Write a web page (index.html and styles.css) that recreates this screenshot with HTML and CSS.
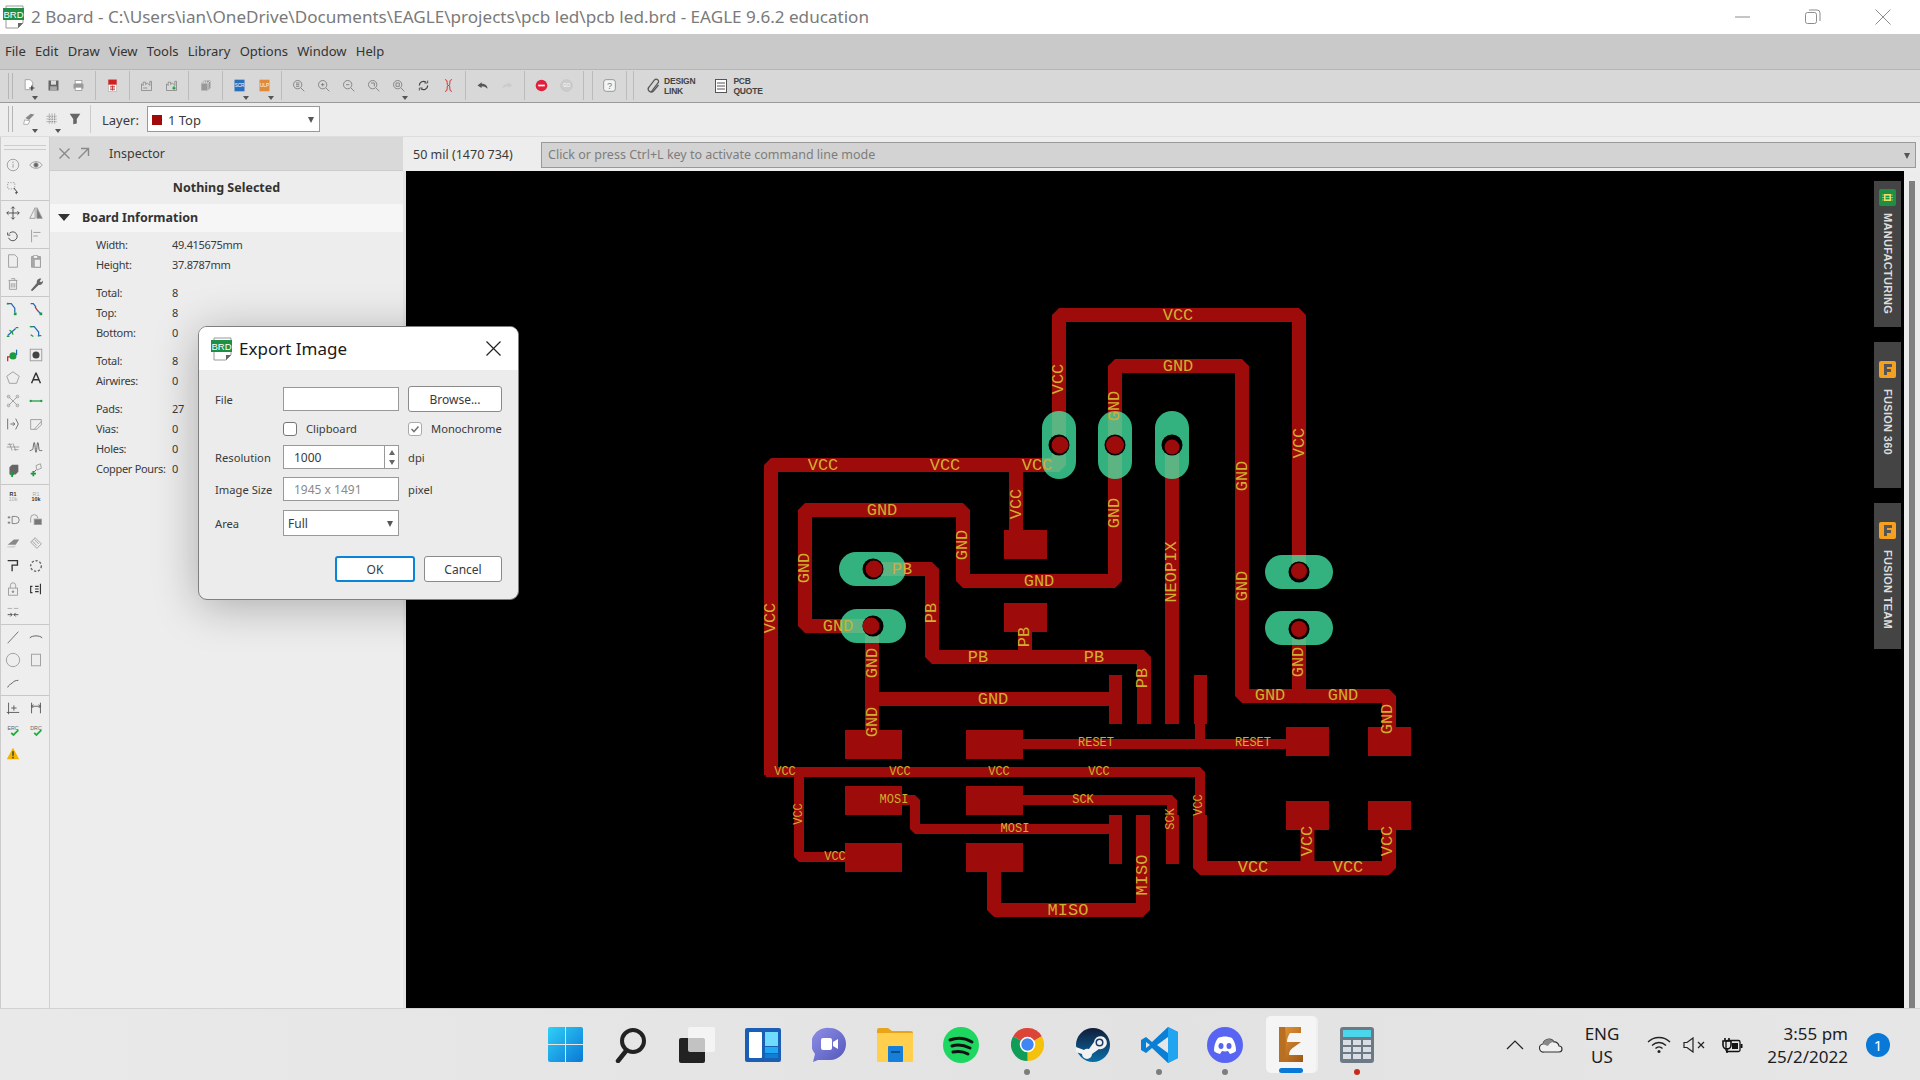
FILE: index.html
```html
<!DOCTYPE html>
<html lang="en">
<head>
    <meta charset="UTF-8">
    <meta name="viewport" content="width=device-width, initial-scale=1.0">
    <title>EAGLE Board</title>
    <link rel="stylesheet" href="styles.css">
</head>
<body>
    <div class="titlebar">
        <svg class="brd-icon" width="22" height="24" viewBox="0 0 22 24"><path d="M3 1h17v17l-5 5H3z" fill="#fff" stroke="#999"/><path d="M20 18h-5v5z" fill="#666"/><rect x="0" y="3" width="21" height="12" fill="#1f8f45"/><text x="10.5" y="13" class="brd-text">BRD</text></svg>
        <div class="title-text">2 Board - C:\Users\ian\OneDrive\Documents\EAGLE\projects\pcb led\pcb led.brd - EAGLE 9.6.2 education</div>
        <div class="win-buttons">
            <svg width="16" height="16" viewBox="0 0 16 16"><path d="M0 8h15" stroke="#8c8c8c"/></svg>
            <svg width="16" height="16" viewBox="0 0 16 16"><rect x=".5" y="3.5" width="11" height="11" rx="2" fill="none" stroke="#8c8c8c"/><path d="M4 1h8a3 3 0 0 1 3 3v8" fill="none" stroke="#8c8c8c"/></svg>
            <svg width="16" height="16" viewBox="0 0 16 16"><path d="M.5.5l15 15M15.5.5l-15 15" stroke="#8c8c8c"/></svg>
        </div>
    </div>

    <div class="menubar">
        <span>File</span><span>Edit</span><span>Draw</span><span>View</span><span>Tools</span><span>Library</span><span>Options</span><span>Window</span><span>Help</span>
    </div>

    <div class="toolbar">
        <i class="grip"></i>
        <span class="tb dd"><svg width="18" height="18" viewBox="0 0 18 18"><path d="M5 2h6l3 3v9H5z" fill="#fff" stroke="#999"/><path d="M10 12h6M13 9v6" stroke="#333" stroke-width="1.4"/></svg></span>
        <span class="tb"><svg width="18" height="18" viewBox="0 0 18 18"><path d="M3 3h12v12H3z" fill="#666"/><rect x="6" y="3" width="6" height="5" fill="#ddd"/><rect x="5" y="10" width="8" height="5" fill="#aaa"/></svg></span>
        <span class="tb"><svg width="18" height="18" viewBox="0 0 18 18"><rect x="3" y="7" width="12" height="6" rx="1" fill="#999"/><rect x="5" y="3" width="8" height="4" fill="#fff" stroke="#999"/><rect x="5" y="11" width="8" height="4" fill="#fff" stroke="#999"/></svg></span>
        <i class="tsep"></i>
        <span class="tb"><svg width="18" height="18" viewBox="0 0 18 18"><rect x="4" y="2" width="10" height="14" fill="#fff" stroke="#bbb"/><rect x="4" y="2" width="10" height="6" fill="#d02020"/><path d="M6 10h6M6 12h6M6 14h6M9 9v6" stroke="#b33"/></svg></span>
        <i class="tsep"></i>
        <span class="tb"><svg width="18" height="18" viewBox="0 0 18 18"><path d="M3 15V7l2 2V5h3v3l2-2 3 3V4h2v11z" fill="none" stroke="#888"/><path d="M5 12h5" stroke="#888"/></svg></span>
        <span class="tb"><svg width="18" height="18" viewBox="0 0 18 18"><path d="M3 15V7l2 2V5h3v3l2-2 3 3V4h2v11z" fill="none" stroke="#888"/><path d="M10 12h4M12 10v4" stroke="#1a9c3e" stroke-width="1.5"/></svg></span>
        <i class="tsep"></i>
        <span class="tb"><svg width="18" height="18" viewBox="0 0 18 18"><path d="M4 6l3-3h8v9l-3 3H4z" fill="#999"/><path d="M4 6h8v9M12 6l3-3M6 3v3M8 3v3M10 3v3" stroke="#ddd" fill="none"/></svg></span>
        <i class="tsep"></i>
        <span class="tb dd"><svg width="18" height="18" viewBox="0 0 18 18"><rect x="3" y="2" width="12" height="14" fill="#2a6fba"/><text x="9" y="11" class="mini-text">SCR</text></svg></span>
        <span class="tb dd"><svg width="18" height="18" viewBox="0 0 18 18"><rect x="3" y="2" width="12" height="14" fill="#e08a3c"/><text x="9" y="11" class="mini-text">ULP</text></svg></span>
        <i class="tsep"></i>
        <span class="tb"><svg class="zoom" width="18" height="18" viewBox="0 0 18 18"><circle cx="8" cy="8" r="5"/><path d="M12 12l4 4M6 8h4M6 6h4M6 10h4"/></svg></span>
        <span class="tb"><svg class="zoom" width="18" height="18" viewBox="0 0 18 18"><circle cx="8" cy="8" r="5"/><path d="M12 12l4 4M6 8h4M8 6v4"/></svg></span>
        <span class="tb"><svg class="zoom" width="18" height="18" viewBox="0 0 18 18"><circle cx="8" cy="8" r="5"/><path d="M12 12l4 4M6 8h4"/></svg></span>
        <span class="tb"><svg class="zoom" width="18" height="18" viewBox="0 0 18 18"><circle cx="8" cy="8" r="5"/><path d="M12 12l4 4M6 6h4v4"/></svg></span>
        <span class="tb dd"><svg class="zoom" width="18" height="18" viewBox="0 0 18 18"><circle cx="8" cy="8" r="5"/><path d="M12 12l4 4M6 6h4v4H6z"/></svg></span>
        <span class="tb"><svg width="18" height="18" viewBox="0 0 18 18"><path d="M4 9a5 5 0 0 1 8-4M14 9a5 5 0 0 1-8 4" fill="none" stroke="#444" stroke-width="1.5"/><path d="M10 6h4V3M8 12H4v3" fill="none" stroke="#444"/></svg></span>
        <span class="tb"><svg width="18" height="18" viewBox="0 0 18 18"><path d="M5 2c4 0 1 7 4 7s0 7 4 7M13 2c-4 0-1 7-4 7s0 7-4 7" fill="none" stroke="#d02020" stroke-width="1.2"/></svg></span>
        <i class="tsep"></i>
        <span class="tb"><svg width="18" height="18" viewBox="0 0 18 18"><path d="M8 5L3 9l5 3V10c3 0 5 1 7 3 0-4-3-6-7-6z" fill="#555"/></svg></span>
        <span class="tb"><svg width="18" height="18" viewBox="0 0 18 18"><path d="M10 5l5 4-5 3V10c-3 0-5 1-7 3 0-4 3-6 7-6z" fill="#ccc"/></svg></span>
        <i class="tsep"></i>
        <span class="tb"><svg width="18" height="18" viewBox="0 0 18 18"><circle cx="9" cy="9" r="7" fill="#e2203c"/><rect x="5" y="8" width="8" height="2" fill="#fff"/></svg></span>
        <span class="tb"><svg width="18" height="18" viewBox="0 0 18 18"><circle cx="9" cy="9" r="7" fill="#ccc" stroke="#c4c4c4"/><text x="9" y="11" class="mini-text">GO</text></svg></span>
        <i class="tsep"></i><i class="tsep"></i>
        <span class="tb"><svg width="18" height="18" viewBox="0 0 18 18"><rect x="2" y="2" width="14" height="14" rx="3" fill="#f4f4f4" stroke="#888"/><text x="9" y="13" class="help-text">?</text></svg></span>
        <i class="tsep"></i>
        <i class="tsep narrow"></i>
        <span class="linkbtn link-first"><svg width="16" height="18" viewBox="0 0 16 18"><path d="M5 15l7-9a2.300 2.300 0 0 0-3.500-3L3 10a3 3 0 0 0 4.500 4l5-6" fill="none" stroke="#555" stroke-width="1.200"/></svg><span>DESIGN<br>LINK</span></span>
        <span class="linkbtn link-second"><svg width="14" height="18" viewBox="0 0 14 18"><rect x="1.5" y="2.5" width="11" height="13" fill="#fff" stroke="#555"/><path d="M3 6h8M3 9h8M3 12h8" stroke="#555" stroke-width="1.200"/></svg><span>PCB<br>QUOTE</span></span>
    </div>

    <div class="layerbar">
        <i class="grip"></i>
        <span class="lb dd"><svg width="18" height="18" viewBox="0 0 18 18"><path d="M5 8l6-5 4 1-6 6z" fill="#888"/><path d="M4 10l6 1-2 4H3z" fill="#fff" stroke="#aaa"/></svg></span>
        <span class="lb dd"><svg width="18" height="18" viewBox="0 0 18 18"><path d="M6 3v12M9 3v12M12 3v12M3 6h12M3 9h12M3 12h12" stroke="#777" stroke-dasharray="1 1"/></svg></span>
        <span class="lb"><svg width="18" height="18" viewBox="0 0 18 18"><path d="M3 3h12l-4 6v5l-4 1V9z" fill="#666"/></svg></span>
        <i class="lsep"></i>
        <span class="layer-label">Layer:</span>
        <div class="layer-combo"><i class="swatch"></i><span>1 Top</span><i class="tri"></i></div>
    </div>

    <div class="workspace">
        <div class="toolstrip">
            <div class="tool-grip"></div>
            <div class="tool-group">
                <span><svg class="ic" viewBox="0 0 18 18"><circle cx="9" cy="9" r="6.5"/><path d="M9 8v4M9 5v2"/></svg></span>
                <span><svg class="ic" viewBox="0 0 18 18"><path d="M2 9c3-5 11-5 14 0-3 5-11 5-14 0z"/><circle cx="9" cy="9" r="2.5" fill="#666"/></svg></span>
                <span><svg class="ic" viewBox="0 0 18 18"><path d="M3 3h8v7H3z" stroke-dasharray="1.500 1.500"/><path d="M10 9l4 5-2 0 1 2" stroke="#333"/></svg></span>
            </div>
            <div class="tool-group">
                <span><svg class="ic" viewBox="0 0 18 18"><path d="M9 2v14M2 9h14M7 4l2-2 2 2M7 14l2 2 2-2M4 7L2 9l2 2M14 7l2 2-2 2" stroke="#444"/></svg></span>
                <span><svg class="ic" viewBox="0 0 18 18"><path d="M8 3L2 15h6z"/><path d="M10 3l6 12h-6z" fill="#777"/></svg></span>
                <span><svg class="ic" viewBox="0 0 18 18"><path d="M5 6a5 5 0 1 1-1 5M3 5v3h3" stroke="#444"/></svg></span>
                <span><svg class="ic" viewBox="0 0 18 18"><path d="M4 2v14M6 5h8M6 9h5"/></svg></span>
            </div>
            <div class="tool-group">
                <span><svg class="ic" viewBox="0 0 18 18"><path d="M4 2h7l3 3v11H4z"/></svg></span>
                <span><svg class="ic" viewBox="0 0 18 18"><path d="M4 4h10v12H4z" fill="#aaa"/><path d="M6 3h5v3H6z" fill="#fff"/><path d="M7 7h7v9H7z" fill="#eee"/></svg></span>
                <span><svg class="ic" viewBox="0 0 18 18"><path d="M4 5h10M5 5v10h8V5M7 3h4v2M7 8v5M9 8v5M11 8v5"/></svg></span>
                <span><svg class="ic" viewBox="0 0 18 18"><path d="M3 16l7-8c-1-3 2-6 5-5l-2 3 2 1 2-2c0 4-3 6-5 5l-7 7z" fill="#666" stroke="none"/></svg></span>
            </div>
            <div class="tool-group long">
                <span><svg class="ic" viewBox="0 0 18 18"><path d="M3 3h4l4 5v5" stroke="#1f6bb5" stroke-width="1.4"/><rect x="2" y="2" width="2" height="2" fill="#1a9c3e" stroke="none"/><rect x="10" y="13" width="3" height="3" fill="#1a9c3e" stroke="none"/></svg></span>
                <span><svg class="ic" viewBox="0 0 18 18"><path d="M3 3h3l3 4" stroke="#1f6bb5" stroke-width="1.4"/><path d="M8 7l3 4" stroke="#d02020" stroke-width="1.4"/><path d="M11 11l3 3" stroke="#1f6bb5" stroke-width="1.4"/><rect x="13" y="13" width="3" height="3" fill="#1a9c3e" stroke="none"/></svg></span>
                <span><svg class="ic" viewBox="0 0 18 18"><path d="M3 13L12 5" stroke="#1f6bb5" stroke-width="1.4"/><path d="M5 7l3 2 1 3M2 14h3M12 4h3" stroke="#1a9c3e" stroke-width="1.4"/></svg></span>
                <span><svg class="ic" viewBox="0 0 18 18"><path d="M3 3h4l5 6v5" stroke="#1f6bb5" stroke-width="1.4"/><path d="M3 12l3 2M11 13h4M2 3h3" stroke="#1a9c3e" stroke-width="1.4"/></svg></span>
                <span><svg class="ic" viewBox="0 0 18 18"><path d="M3 16v-5h3" stroke="#d02020" stroke-width="1.4"/><circle cx="9" cy="10" r="4" fill="#1a9c3e" stroke="none"/><path d="M13 9V3" stroke="#1f6bb5" stroke-width="1.4"/></svg></span>
                <span><svg class="ic" viewBox="0 0 18 18"><rect x="2.5" y="2.5" width="13" height="13"/><circle cx="9" cy="9" r="4" fill="#444" stroke="none"/></svg></span>
                <span><svg class="ic" viewBox="0 0 18 18"><path d="M9 2l7 5-3 8H5L2 7z"/></svg></span>
                <span><svg class="ic" viewBox="0 0 18 18"><path d="M9 3L4 15M9 3l5 12M6 11h6" stroke="#333" stroke-width="1.6"/></svg></span>
                <span><svg class="ic" viewBox="0 0 18 18"><path d="M4 4l10 10M14 4L4 14" stroke="#999"/><circle cx="4" cy="4" r="1.5"/><circle cx="14" cy="4" r="1.5"/><circle cx="4" cy="14" r="1.5"/><circle cx="14" cy="14" r="1.5"/></svg></span>
                <span><svg class="ic" viewBox="0 0 18 18"><path d="M3 9h12" stroke="#1a9c3e" stroke-width="1.4"/><circle cx="3" cy="9" r="1.300" fill="#1a9c3e" stroke="none"/><circle cx="15" cy="9" r="1.300" fill="#1a9c3e" stroke="none"/></svg></span>
                <span><svg class="ic" viewBox="0 0 18 18"><path d="M3 3v12M6 9h5M9 7l2 2-2 2M12 3l3 6-3 6" stroke="#666"/></svg></span>
                <span><svg class="ic" viewBox="0 0 18 18"><path d="M3 4h12v6l-5 5H3zM7 15l8-9"/></svg></span>
                <span><svg class="ic" viewBox="0 0 18 18"><path d="M2 9h14M5 5l3 8M9 5l3 8M3 6h5M10 12h5"/></svg></span>
                <span><svg class="ic" viewBox="0 0 18 18"><path d="M2 13c2 0 2-1 3-1s1-8 2-8 1 11 2 11 1-11 2-11 1 9 2 9 1 0 3 0" stroke="#555"/></svg></span>
                <span><svg class="ic" viewBox="0 0 18 18"><path d="M5 6l3-3h7v8l-3 3H5z" fill="#666" stroke="none"/><path d="M6 14h4M8 11v6" stroke="#1a9c3e" stroke-width="2"/></svg></span>
                <span><svg class="ic" viewBox="0 0 18 18"><path d="M9 4l5-2 1 5-5 2z" stroke="#999"/><path d="M3 13h6M6 10v6" stroke="#1a9c3e" stroke-width="2"/><path d="M9 9l-2 2" stroke="#555"/></svg></span>
            </div>
            <div class="tool-group">
                <span><svg class="ic" viewBox="0 0 18 18"><text x="9" y="8" class="tool-text dark">R1</text><text x="9" y="14" class="tool-text pale">10k</text></svg></span>
                <span><svg class="ic" viewBox="0 0 18 18"><text x="9" y="8" class="tool-text pale">R1</text><text x="9" y="14" class="tool-text dark">10k</text></svg></span>
                <span><svg class="ic" viewBox="0 0 18 18"><path d="M8 5h4a4 4 0 0 1 0 8H8zM3 6h3M3 12h3M4.5 4.5v3M4.5 10.5v3" stroke="#777"/></svg></span>
                <span><svg class="ic" viewBox="0 0 18 18"><path d="M3 12V7a4 4 0 0 1 8 0"/><rect x="7" y="8" width="8" height="6" fill="#777"/></svg></span>
                <span><svg class="ic" viewBox="0 0 18 18"><path d="M3 11l7-6h6l-4 6z" fill="#888" stroke="none"/><path d="M2 13l10-1-1 2H3z" fill="#ccc" stroke="none"/></svg></span>
                <span><svg class="ic" viewBox="0 0 18 18"><path d="M3 8l5-5 7 7-5 5zM5 7l5 5M7 5l5 5"/></svg></span>
                <span><svg class="ic" viewBox="0 0 18 18"><path d="M3 3h11v5H8v7" stroke="#333" stroke-width="1.5"/></svg></span>
                <span><svg class="ic" viewBox="0 0 18 18"><circle cx="9" cy="9" r="6" stroke="#666" stroke-width="1.6" stroke-dasharray="2.500 2"/></svg></span>
                <span><svg class="ic" viewBox="0 0 18 18"><path d="M6 8V5a3 3 0 0 1 6 0v3"/><rect x="4" y="8" width="10" height="8"/><circle cx="9" cy="12" r="1" fill="#777"/></svg></span>
                <span><svg class="ic" viewBox="0 0 18 18"><path d="M5 6H3v7h2M8 6h4M8 9h4M8 12h4M14 3v12" stroke="#333" stroke-width="1.3"/></svg></span>
                <span><svg class="ic" viewBox="0 0 18 18"><path d="M3 5h5M10 5h5" stroke="#aaa"/><path d="M3 12h5M10 12h5M6 10l2 2-2 2M12 10l-2 2 2 2" stroke="#444"/></svg></span>
            </div>
            <div class="tool-group">
                <span><svg class="ic" viewBox="0 0 18 18"><path d="M3 16L15 3" stroke="#666"/></svg></span>
                <span><svg class="ic" viewBox="0 0 18 18"><path d="M2 10c3-3 11-3 14 0" stroke="#555"/></svg></span>
                <span><svg class="ic" viewBox="0 0 18 18"><circle cx="9" cy="9" r="7.5"/></svg></span>
                <span><svg class="ic" viewBox="0 0 18 18"><rect x="4" y="2.5" width="10" height="13"/></svg></span>
                <span><svg class="ic" viewBox="0 0 18 18"><path d="M3 14c1-3 3-3 5-5s4-3 7-3" stroke="#555"/></svg></span>
            </div>
            <div class="tool-group">
                <span><svg class="ic" viewBox="0 0 18 18"><path d="M4 3v13M2 14h14M7 9h6M10 6v6" stroke="#555"/></svg></span>
                <span><svg class="ic" viewBox="0 0 18 18"><path d="M4 3v12M14 3v12M4 7h10M6 5L4 7l2 2M12 5l2 2-2 2" stroke="#555"/></svg></span>
                <span><svg class="ic" viewBox="0 0 18 18"><text x="9" y="8" class="tool-text mid">ERC</text><path d="M7 11l2.500 2.500L15 8" stroke="#1fae3c" stroke-width="2"/></svg></span>
                <span><svg class="ic" viewBox="0 0 18 18"><text x="9" y="8" class="tool-text mid">DRC</text><path d="M7 11l2.500 2.500L15 8" stroke="#1fae3c" stroke-width="2"/></svg></span>
                <span><svg class="ic" viewBox="0 0 18 18"><path d="M9 2l7 13H2z" fill="#f3b400" stroke="none"/><path d="M9 6v5M9 12v2" stroke="#333" stroke-width="1.5"/></svg></span>
            </div>
        </div>

        <div class="inspector">
            <div class="inspector-head">
                <svg width="13" height="13" viewBox="0 0 13 13"><path d="M1.5 1.500l10 10M11.500 1.500l-10 10" stroke="#8a8a8a" stroke-width="1.4"/></svg>
                <svg class="popout" width="13" height="13" viewBox="0 0 13 13"><path d="M1.500 11.500l10-10M4 1.500h7.500V9" fill="none" stroke="#8a8a8a" stroke-width="1.4"/></svg>
                <span>Inspector</span>
            </div>
            <div class="nothing">Nothing Selected</div>
            <div class="board-info"><i class="tri-big"></i><span>Board Information</span></div>
            <div class="info-list">
                <div class="info-group">
                    <div class="info-row"><span>Width:</span><span>49.415675mm</span></div>
                    <div class="info-row"><span>Height:</span><span>37.8787mm</span></div>
                </div>
                <div class="info-group">
                    <div class="info-row"><span>Total:</span><span>8</span></div>
                    <div class="info-row"><span>Top:</span><span>8</span></div>
                    <div class="info-row"><span>Bottom:</span><span>0</span></div>
                </div>
                <div class="info-group">
                    <div class="info-row"><span>Total:</span><span>8</span></div>
                    <div class="info-row"><span>Airwires:</span><span>0</span></div>
                </div>
                <div class="info-group">
                    <div class="info-row"><span>Pads:</span><span>27</span></div>
                    <div class="info-row"><span>Vias:</span><span>0</span></div>
                    <div class="info-row"><span>Holes:</span><span>0</span></div>
                    <div class="info-row"><span>Copper Pours:</span><span>0</span></div>
                </div>
            </div>
        </div>

        <div class="main">
            <div class="cmd-row">
                <span class="grid-info">50 mil (1470 734)</span>
                <div class="cmd-input"><span>Click or press Ctrl+L key to activate command line mode</span><i class="tri"></i></div>
            </div>
            <div class="canvas-row">
                <div class="canvas">
                    <svg class="pcb" width="1498" height="838" viewBox="406 171 1498 838">
                        <g class="w14">
                            <polyline points="1299,572 1299,315 1059,315 1059,465 771,465 771,775"/>
                            <polyline points="1115,445 1115,366 1242,366 1242,696 1389,696 1389,727"/>
                            <polyline points="1115,445 1115,581 963,581 963,510 805,510 805,626 873,626"/>
                            <polyline points="1016,465 1016,530"/>
                            <polyline points="873,569 932,569 932,657 1144,657 1144,724"/>
                            <polyline points="1025,632 1025,657"/>
                            <polyline points="1172,445 1172,724"/>
                            <polyline points="872,626 872,730"/>
                            <polyline points="872,699 1115,699"/>
                            <polyline points="1299,629 1299,696"/>
                            <polyline points="1143,815 1143,910 994,910 994,872"/>
                            <polyline points="1200,815 1200,868 1389,868 1389,830"/>
                            <polyline points="1307.5,868 1307.5,830"/>
                        </g>
                        <g class="w10">
                            <polyline points="766,772 1200,772 1200,815"/>
                            <polyline points="1023,744 1286,744"/>
                            <polyline points="1200,724 1200,744"/>
                            <polyline points="799,772 799,857 845,857"/>
                            <polyline points="902,800 915,800 915,829 1109,829"/>
                            <polyline points="1023,800 1172,800 1172,815"/>
                        </g>
                        <g class="smd">
                            <rect x="1004" y="530" width="43" height="29"/>
                            <rect x="1004" y="603" width="43" height="29"/>
                            <rect x="845" y="730" width="57" height="29"/>
                            <rect x="966" y="730" width="57" height="29"/>
                            <rect x="845" y="786" width="57" height="29"/>
                            <rect x="966" y="786" width="57" height="29"/>
                            <rect x="845" y="843" width="57" height="29"/>
                            <rect x="966" y="843" width="57" height="29"/>
                            <rect x="1286" y="727" width="43" height="29"/>
                            <rect x="1368" y="727" width="43" height="29"/>
                            <rect x="1286" y="801" width="43" height="29"/>
                            <rect x="1368" y="801" width="43" height="29"/>
                            <rect x="1109" y="675" width="13" height="49"/>
                            <rect x="1138" y="675" width="13" height="49"/>
                            <rect x="1166" y="675" width="13" height="49"/>
                            <rect x="1194" y="675" width="13" height="49"/>
                            <rect x="1109" y="815" width="13" height="49"/>
                            <rect x="1137" y="815" width="13" height="49"/>
                            <rect x="1166" y="815" width="13" height="49"/>
                            <rect x="1194" y="815" width="13" height="49"/>
                        </g>
                        <g class="th-pad">
                            <rect x="1042" y="411" width="34" height="68" rx="17"/>
                            <rect x="1098" y="411" width="34" height="68" rx="17"/>
                            <rect x="1155" y="411" width="34" height="68" rx="17"/>
                            <rect x="839" y="552" width="67" height="34" rx="17"/>
                            <rect x="840" y="609" width="66" height="34" rx="17"/>
                            <rect x="1265" y="555" width="68" height="34" rx="17"/>
                            <rect x="1265" y="611" width="68" height="34" rx="17"/>
                        </g>
                        <g class="hole">
                            <circle cx="1059" cy="445" r="10.5"/>
                            <circle cx="1115" cy="445" r="10.5"/>
                            <circle cx="1172" cy="445" r="10.5"/>
                            <circle cx="873" cy="569" r="10.5"/>
                            <circle cx="873" cy="626" r="10.5"/>
                            <circle cx="1299" cy="572" r="10.5"/>
                            <circle cx="1299" cy="629" r="10.5"/>
                        </g>
                        <g class="drill">
                            <circle cx="1060" cy="445" r="8.5"/>
                            <circle cx="1115" cy="445" r="9"/>
                            <circle cx="1172" cy="447" r="7.5"/>
                            <circle cx="874" cy="569" r="8.5"/>
                            <circle cx="871" cy="626" r="8.5"/>
                            <circle cx="1299" cy="571" r="8"/>
                            <circle cx="1299" cy="629" r="8"/>
                        </g>
                        <g class="lbl">
                            <text x="1178" y="315">VCC</text>
                            <text x="1178" y="366">GND</text>
                            <text x="823" y="465">VCC</text>
                            <text x="945" y="465">VCC</text>
                            <text x="1037" y="465">VCC</text>
                            <text x="882" y="510">GND</text>
                            <text x="902" y="569">PB</text>
                            <text x="1039" y="581">GND</text>
                            <text x="838" y="626">GND</text>
                            <text x="978" y="657">PB</text>
                            <text x="1094" y="657">PB</text>
                            <text x="1270" y="695">GND</text>
                            <text x="1343" y="695">GND</text>
                            <text x="993" y="699">GND</text>
                            <text x="1253" y="867">VCC</text>
                            <text x="1348" y="867">VCC</text>
                            <text x="1068" y="910">MISO</text>
                            <text transform="translate(1058 379) rotate(-90)">VCC</text>
                            <text transform="translate(1114 406) rotate(-90)">GND</text>
                            <text transform="translate(1299 443) rotate(-90)">VCC</text>
                            <text transform="translate(1242 476) rotate(-90)">GND</text>
                            <text transform="translate(1016 504) rotate(-90)">VCC</text>
                            <text transform="translate(1114 513) rotate(-90)">GND</text>
                            <text transform="translate(962 545) rotate(-90)">GND</text>
                            <text transform="translate(804 568) rotate(-90)">GND</text>
                            <text transform="translate(1171 572) rotate(-90)">NEOPIX</text>
                            <text transform="translate(1242 586) rotate(-90)">GND</text>
                            <text transform="translate(770 618) rotate(-90)">VCC</text>
                            <text transform="translate(931 613) rotate(-90)">PB</text>
                            <text transform="translate(1024 637) rotate(-90)">PB</text>
                            <text transform="translate(1298 662) rotate(-90)">GND</text>
                            <text transform="translate(872 663) rotate(-90)">GND</text>
                            <text transform="translate(1142 678) rotate(-90)">PB</text>
                            <text transform="translate(1387 719) rotate(-90)">GND</text>
                            <text transform="translate(872 722) rotate(-90)">GND</text>
                            <text transform="translate(1307 841) rotate(-90)">VCC</text>
                            <text transform="translate(1387 841) rotate(-90)">VCC</text>
                            <text transform="translate(1142 875) rotate(-90)">MISO</text>
                        </g>
                        <g class="lbl small">
                            <text x="1096" y="743">RESET</text>
                            <text x="1253" y="743">RESET</text>
                            <text x="785" y="772">VCC</text>
                            <text x="900" y="772">VCC</text>
                            <text x="999" y="772">VCC</text>
                            <text x="1099" y="772">VCC</text>
                            <text x="894" y="800">MOSI</text>
                            <text x="1083" y="800">SCK</text>
                            <text x="1015" y="829">MOSI</text>
                            <text x="835" y="857">VCC</text>
                            <text transform="translate(1199 805) rotate(-90)">VCC</text>
                            <text transform="translate(799 814) rotate(-90)">VCC</text>
                            <text transform="translate(1171 819) rotate(-90)">SCK</text>
                        </g>
                    </svg>
                    <div class="side-tabs">
                        <div class="side-tab">
                            <svg width="17" height="17" viewBox="0 0 17 17"><rect width="17" height="17" rx="2" fill="#1f8f45"/><rect x="5" y="5" width="7" height="7" fill="#e8e06a"/><rect x="6.5" y="6.5" width="4" height="4" fill="#1f8f45"/><path d="M3 6h11M3 8.500h11M3 11h11" stroke="#e8e06a" stroke-width=".6" fill="none"/></svg>
                            <span>MANUFACTURING</span>
                        </div>
                        <div class="side-tab low">
                            <svg width="17" height="17" viewBox="0 0 17 17"><rect width="17" height="17" rx="2" fill="#f5a11f"/><path d="M5 3h8v3H8v2h4v3H8v3H5z" fill="#555"/></svg>
                            <span>FUSION 360</span>
                        </div>
                        <div class="side-tab low">
                            <svg width="17" height="17" viewBox="0 0 17 17"><rect width="17" height="17" rx="2" fill="#f5a11f"/><path d="M5 3h8v3H8v2h4v3H8v3H5z" fill="#555"/></svg>
                            <span>FUSION TEAM</span>
                        </div>
                    </div>
                </div>
                <div class="scrollbar"><div class="thumb"></div></div>
            </div>
        </div>
    </div>

    <div class="taskbar">
        <div class="task-icons">
            <div class="task"><svg width="35" height="35" viewBox="0 0 35 35"><defs><linearGradient id="win" x1="0" y1="0" x2="1" y2="1"><stop offset="0" stop-color="#2fd0f7"/><stop offset="1" stop-color="#0a78d6"/></linearGradient></defs><path d="M0 2a2 2 0 0 1 2-2h15v17H0zM18 0h15a2 2 0 0 1 2 2v15H18zM0 18h17v17H2a2 2 0 0 1-2-2zM18 18h17v15a2 2 0 0 1-2 2H18z" fill="url(#win)"/></svg></div>
            <div class="task"><svg width="34" height="36" viewBox="0 0 34 36"><circle cx="19" cy="14" r="11" fill="none" stroke="#222" stroke-width="4"/><path d="M12 24L4 34" stroke="#222" stroke-width="4.5" stroke-linecap="round"/></svg></div>
            <div class="task"><svg width="36" height="36" viewBox="0 0 36 36"><rect x="0" y="11" width="26" height="25" rx="2" fill="#222"/><rect x="9" y="0" width="27" height="25" rx="2" fill="#f8f8f8" fill-opacity=".75"/></svg></div>
            <div class="task"><svg width="36" height="36" viewBox="0 0 36 36"><rect width="36" height="34" y="1" rx="2" fill="#1a5fb4"/><rect x="4" y="5" width="13" height="26" rx="1" fill="#fff"/><rect x="20" y="5" width="13" height="14" fill="#6fdcff"/><rect x="20" y="20" width="13" height="6" fill="#1fa8f5"/><rect x="20" y="27" width="13" height="4" fill="#0f7fd6"/></svg></div>
            <div class="task"><svg width="34" height="36" viewBox="0 0 34 36"><defs><linearGradient id="teams" x1="0" y1="0" x2="1" y2="1"><stop offset="0" stop-color="#8f8fe8"/><stop offset="1" stop-color="#5257b8"/></linearGradient></defs><path d="M18 1a16 16 0 0 1 0 32H6l-5 2 2-8A16 16 0 0 1 18 1z" fill="url(#teams)"/><rect x="9" y="11" width="11" height="12" rx="2" fill="#fff"/><path d="M21 15l5-3v10l-5-3z" fill="#fff"/></svg></div>
            <div class="task"><svg width="36" height="34" viewBox="0 0 36 34"><path d="M0 2a2 2 0 0 1 2-2h9l4 3h19a2 2 0 0 1 2 2v6H0z" fill="#e8a51c"/><rect y="5" width="36" height="29" rx="1" fill="#ffcf4d"/><rect x="11" y="18" width="15" height="16" rx="1" fill="#1680d8"/><rect x="14" y="23" width="9" height="2" fill="#0a4f94"/></svg></div>
            <div class="task"><svg width="36" height="36" viewBox="0 0 36 36"><circle cx="18" cy="18" r="18" fill="#1ed760"/><path d="M7 13c8-3 15-2 22 2M9 19c6-2 12-1 18 2M10 25c5-1 10-1 15 2" fill="none" stroke="#111" stroke-width="3" stroke-linecap="round"/></svg></div>
            <div class="task dot"><svg width="33" height="33" viewBox="0 0 32 32"><path d="M16 16L2.140 8A16 16 0 0 1 29.860 8z" fill="#db4437"/><path d="M16 16L29.860 8A16 16 0 0 1 16 32z" fill="#f4c20d"/><path d="M16 16L16 32A16 16 0 0 1 2.140 8z" fill="#0f9d58"/><circle cx="16" cy="16" r="7.5" fill="#fff"/><circle cx="16" cy="16" r="6" fill="#4285f4"/></svg></div>
            <div class="task"><svg width="34" height="34" viewBox="0 0 34 34"><defs><linearGradient id="steam" x1="0" y1="0" x2="0" y2="1"><stop offset="0" stop-color="#111d3a"/><stop offset="1" stop-color="#0a6ea8"/></linearGradient></defs><circle cx="17" cy="17" r="17" fill="url(#steam)"/><path d="M0 19l8 3a5 5 0 0 1 5-1l5-7a6.500 6.500 0 1 1 5 7l-7 5a5 5 0 0 1-10 0L0 24z" fill="#f2f2f2"/><circle cx="23.5" cy="14.5" r="4" fill="#1d3a66"/><circle cx="23.5" cy="14.5" r="2.5" fill="#f2f2f2"/></svg></div>
            <div class="task dot"><svg width="37" height="36" viewBox="0 0 37 36"><path d="M27 0l10 5v26l-10 5L11 21l-6 5-5-3V13l5-3 6 5z" fill="#0a7fd6"/><path d="M27 0l10 5v26l-10 5z" fill="#22a5f1"/><path d="M27 10L16 18l11 8z" fill="#e6e6e6"/><path d="M5 15l4 3-4 3z" fill="#e6e6e6"/></svg></div>
            <div class="task dot"><svg width="36" height="36" viewBox="0 0 36 36"><circle cx="18" cy="18" r="18" fill="#5865f2"/><path d="M11 11c5-2 9-2 14 0 3 4 4 8 4 13-2 2-4 2-6 3l-2-3c-2 .5-4 .5-6 0l-2 3c-2-1-4-1-6-3 0-5 1-9 4-13z" fill="#fff"/><ellipse cx="14" cy="19" rx="2.5" ry="3" fill="#5865f2"/><ellipse cx="22" cy="19" rx="2.5" ry="3" fill="#5865f2"/></svg></div>
            <div class="task active"><svg width="24" height="35" viewBox="0 0 24 35"><defs><linearGradient id="eagle" x1="0" y1="0" x2="1" y2="1"><stop offset="0" stop-color="#e79a3a"/><stop offset="1" stop-color="#9c5618"/></linearGradient></defs><path d="M0 0h22v6H11c-2 3-3 6-3 9h14l-7 5c-3 2-5 4-5 8h14v7H0z" fill="url(#eagle)"/><path d="M0 0h6c1 10 1 25 0 35H0z" fill="#b96f22"/></svg></div>
            <div class="task red-dot"><svg width="34" height="36" viewBox="0 0 34 36"><rect width="34" height="36" rx="3" fill="#6d7a86"/><rect x="3" y="3" width="28" height="7" fill="#4ad7ec"/><g fill="#d8dee3"><rect x="3" y="13" width="8" height="5"/><rect x="13" y="13" width="8" height="5"/><rect x="23" y="13" width="8" height="5"/><rect x="3" y="20" width="8" height="5"/><rect x="13" y="20" width="8" height="5"/><rect x="23" y="20" width="8" height="5"/><rect x="3" y="27" width="8" height="5"/><rect x="13" y="27" width="8" height="5"/><rect x="23" y="27" width="8" height="5"/></g></svg></div>
        </div>
        <div class="tray">
            <svg width="18" height="10" viewBox="0 0 18 10"><path d="M1 9l8-8 8 8" fill="none" stroke="#222" stroke-width="1.2"/></svg>
            <svg class="tray-cloud" width="24" height="16" viewBox="0 0 24 16"><path d="M5 15a4 4 0 0 1-1-8 6 6 0 0 1 11-2 4.500 4.500 0 0 1 5 4 3 3 0 0 1 0 6z" fill="#f0f0f0" stroke="#333" stroke-width="1.2"/><path d="M4 7a6 6 0 0 1 11-2c-3 0-5 2-6 4-2-1-4-1-5-2z" fill="#888"/></svg>
            <div class="lang">ENG<br>US</div>
            <svg class="tray-wifi" width="24" height="17" viewBox="0 0 24 17"><path d="M1 6c6-6 16-6 22 0M5 9.500c4-4 10-4 14 0M8.500 12.500c2-2 5-2 7 0" fill="none" stroke="#222" stroke-width="1.3"/><circle cx="12" cy="15.5" r="1.5" fill="#222"/></svg>
            <svg class="tray-sound" width="23" height="16" viewBox="0 0 23 16"><path d="M1 5.500h3L10 1v14L4 10.500H1z" fill="none" stroke="#222" stroke-width="1.2"/><path d="M15 5l6 6M21 5l-6 6" stroke="#222" stroke-width="1.2"/></svg>
            <svg class="tray-power" width="24" height="16" viewBox="0 0 24 16"><path d="M6 1v3M10 1v3M4 4h8v4a4 4 0 0 1-8 0zM8 11v5" fill="none" stroke="#111" stroke-width="1.6"/><rect x="7" y="3.5" width="14" height="11" rx="1.5" fill="none" stroke="#111" stroke-width="1.3"/><rect x="13" y="6" width="6" height="6" fill="#111"/><rect x="21.5" y="7" width="2" height="4" fill="#111"/></svg>
            <div class="clock">3:55 pm<br>25/2/2022</div>
            <div class="badge">1</div>
        </div>
    </div>

    <div class="dialog">
        <div class="dialog-title">
            <svg class="dialog-icon" width="22" height="24" viewBox="0 0 22 24"><path d="M3 1h17v17l-5 5H3z" fill="#fff" stroke="#999"/><path d="M20 18h-5v5z" fill="#666"/><rect x="0" y="3" width="21" height="12" fill="#1f8f45"/><text x="10.5" y="13" class="brd-text">BRD</text></svg>
            <span>Export Image</span>
            <svg class="dialog-close" width="15" height="15" viewBox="0 0 15 15"><path d="M.5.5l14 14M14.500.5l-14 14" stroke="#222" stroke-width="1.2"/></svg>
        </div>
        <div class="dialog-body">
            <div class="dlg-row">
                <label class="dlg-label">File</label>
                <div class="field"></div>
                <div class="btn browse">Browse...</div>
            </div>
            <div class="dlg-row check-row">
                <div class="dlg-check"><i class="check"></i><span>Clipboard</span></div>
                <div class="dlg-check side"><i class="check on"><svg width="12" height="12" viewBox="0 0 12 12"><path d="M2.500 6l2.500 2.500 4.500-5" fill="none" stroke="#777" stroke-width="1.6"/></svg></i><span>Monochrome</span></div>
            </div>
            <div class="dlg-row">
                <label class="dlg-label">Resolution</label>
                <div class="field pad-text">1000
                    <div class="spin"><i class="up"></i><i class="down"></i></div>
                </div>
                <span class="unit">dpi</span>
            </div>
            <div class="dlg-row">
                <label class="dlg-label">Image Size</label>
                <div class="field pad-text muted">1945 x 1491</div>
                <span class="unit">pixel</span>
            </div>
            <div class="dlg-row area-row">
                <label class="dlg-label">Area</label>
                <div class="field area"><span>Full</span><i class="tri"></i></div>
            </div>
            <div class="dlg-buttons">
                <div class="btn ok">OK</div>
                <div class="btn cancel">Cancel</div>
            </div>
        </div>
    </div>
</body>
</html>
```

FILE: styles.css
```css
* {
    box-sizing: border-box;
}
body {
    margin: 0;
    padding: 0;
    width: 1920px;
    height: 1080px;
    overflow: hidden;
    position: relative;
    font-family: "Noto Sans", "Open Sans", sans-serif;
    font-size: 12px;
    color: #3a3a3a;
    background: #ededed;
    display: flex;
    flex-direction: column;
}
svg {
    display: block;
    flex: none;
}

/* window title */
.titlebar {
    height: 34px;
    background: #fff;
    display: flex;
    align-items: center;
    padding-left: 3px;
}
.title-text {
    margin-left: 6px;
    font-size: 17.1px;
    color: #7a7a7a;
    white-space: nowrap;
}
.brd-text {
    font-family: "Liberation Sans", sans-serif;
    font-size: 9.5px;
    fill: #fff;
    text-anchor: middle;
}
.win-buttons {
    margin-left: auto;
    display: flex;
    gap: 54px;
    padding-right: 29px;
}

/* menu + toolbars */
.menubar {
    height: 36px;
    background: #c9c9c9;
    border-bottom: 1px solid #b5b5b5;
    display: flex;
    align-items: center;
    gap: 9.3px;
    padding-left: 5px;
    font-size: 13px;
    color: #333;
}
.toolbar {
    height: 33px;
    background: #d8d8d8;
    border-bottom: 1px solid #999;
    display: flex;
    align-items: center;
    padding-left: 8px;
}
.grip {
    width: 5px;
    height: 26px;
    border-left: 1px solid #b5b5b5;
    border-right: 1px solid #b5b5b5;
    margin-right: 3px;
}
.tb {
    width: 25px;
    height: 26px;
    display: flex;
    align-items: center;
    justify-content: center;
    position: relative;
}
.tb svg {
    width: 15px;
    height: 15px;
}
.dd::after {
    content: "";
    position: absolute;
    left: 50%;
    bottom: -1px;
    margin-left: 3px;
    border-left: 3px solid transparent;
    border-right: 3px solid transparent;
    border-top: 4px solid #555;
}
.tsep {
    width: 9px;
    height: 29px;
    display: block;
    background: linear-gradient(#bbb, #bbb) center / 1px 100% no-repeat;
}
.tsep.narrow {
    margin-left: -2px;
}
.zoom {
    fill: none;
    stroke: #777;
    stroke-width: 1;
}
.mini-text {
    font-family: "Liberation Sans", sans-serif;
    font-size: 5.5px;
    fill: #fff;
    text-anchor: middle;
}
.help-text {
    font-family: "Liberation Sans", sans-serif;
    font-size: 11px;
    fill: #777;
    text-anchor: middle;
}
.linkbtn {
    display: flex;
    align-items: center;
    gap: 2px;
    font-family: "Liberation Sans", sans-serif;
    font-weight: bold;
    font-size: 8.5px;
    letter-spacing: -0.2px;
    line-height: 10px;
    color: #444;
}
.link-first {
    margin-left: 8px;
}
.link-second {
    margin-left: 19px;
    gap: 5px;
}
.layerbar {
    height: 34px;
    background: #ededed;
    border-bottom: 1px solid #ddd;
    display: flex;
    align-items: center;
    padding-left: 8px;
}
.layerbar .grip {
    margin-right: 4px;
}
.lb {
    width: 23px;
    height: 26px;
    display: flex;
    align-items: center;
    justify-content: center;
    position: relative;
}
.lb svg {
    width: 16px;
    height: 16px;
}
.lsep {
    width: 1px;
    height: 28px;
    background: #ccc;
    margin-left: 4px;
}
.layer-label {
    margin-left: 11px;
    padding-top: 2px;
    font-size: 13px;
}
.layer-combo {
    width: 173px;
    height: 26px;
    margin-left: 8px;
    background: #fff;
    border: 1px solid #999;
    display: flex;
    align-items: center;
    padding: 1px 0 0 4px;
    font-size: 13px;
    position: relative;
}
.swatch {
    width: 10px;
    height: 10px;
    background: #a00a0a;
    margin-right: 6px;
}
.tri {
    position: absolute;
    right: 5px;
    top: 50%;
    margin-top: -2px;
    border-left: 3.5px solid transparent;
    border-right: 3.5px solid transparent;
    border-top: 6px solid #555;
}

/* left tool strip */
.workspace {
    height: 872px;
    display: flex;
}
.toolstrip {
    width: 50px;
    flex: none;
    background: #eee;
    border-left: 1px solid #ccc;
    border-right: 1px solid #d0d0d0;
    padding-top: 8px;
}
.tool-grip {
    height: 5px;
    margin: 0 3px 4px;
    border-top: 1px solid #ccc;
    border-bottom: 1px solid #ccc;
}
.tool-group {
    display: grid;
    grid-template-columns: 23px 23px;
    grid-auto-rows: 23px;
    padding-left: 0.5px;
    border-bottom: 1px solid #c8c8c8;
    margin-bottom: 1px;
}
.tool-group:last-child {
    border-bottom: none;
}
.tool-group.long {
    padding-bottom: 2px;
}
.tool-group span {
    display: flex;
    align-items: center;
    justify-content: center;
}
.ic {
    width: 16px;
    height: 16px;
    fill: none;
    stroke: #999;
    stroke-width: 1;
}
.tool-text {
    font-family: "Liberation Sans", sans-serif;
    font-size: 6px;
    text-anchor: middle;
    stroke: none;
}
.tool-text.dark {
    fill: #333;
    font-weight: bold;
}
.tool-text.pale {
    fill: #aaa;
}
.tool-text.mid {
    fill: #666;
}

/* inspector */
.inspector {
    width: 353px;
    flex: none;
    background: #ededed;
}
.inspector-head {
    height: 34px;
    background: #d9d9d9;
    border-bottom: 1px solid #ccc;
    display: flex;
    align-items: center;
    padding: 1px 0 0 8px;
    font-size: 12.5px;
}
.popout {
    margin-left: 6px;
}
.inspector-head span {
    margin-left: 19px;
}
.nothing {
    height: 33px;
    line-height: 34px;
    text-align: center;
    font-weight: bold;
    font-size: 12.5px;
    color: #333;
}
.board-info {
    height: 28px;
    background: #f6f6f6;
    display: flex;
    align-items: center;
    padding-left: 8px;
    font-weight: bold;
    font-size: 12.5px;
    color: #333;
}
.tri-big {
    border-left: 6.5px solid transparent;
    border-right: 6.5px solid transparent;
    border-top: 7px solid #333;
    margin-right: 12px;
}
.info-list {
    padding: 3px 0 0 46px;
}
.info-group {
    margin-bottom: 8px;
}
.info-row {
    height: 20px;
    display: flex;
    align-items: center;
    font-size: 11px;
    letter-spacing: -0.3px;
    white-space: nowrap;
}
.info-row span:first-child {
    width: 76px;
}

/* command row + canvas */
.main {
    flex: 1;
    display: flex;
    flex-direction: column;
    min-width: 0;
}
.cmd-row {
    height: 34px;
    display: flex;
    align-items: center;
    background: #ededed;
    padding: 2px 0 0 10px;
}
.grid-info {
    width: 128px;
    font-size: 12.5px;
}
.cmd-input {
    width: 1375px;
    height: 26px;
    background: #d3d3d3;
    border: 1px solid #999;
    display: flex;
    align-items: center;
    padding-left: 6px;
    color: #7d7d7d;
    font-size: 12.5px;
    position: relative;
}
.canvas-row {
    flex: 1;
    display: flex;
    padding-left: 3px;
    background: #e4e4e4;
}
.canvas {
    flex: 1;
    background: #000;
    position: relative;
}
.pcb {
    position: absolute;
    left: 0;
    top: 0;
}
.w14 polyline, .w10 polyline {
    fill: none;
    stroke: #9e0b0b;
    stroke-linejoin: bevel;
}
.w14 polyline {
    stroke-width: 14;
}
.w10 polyline {
    stroke-width: 10;
}
.smd rect {
    fill: #9e0b0b;
}
.th-pad rect {
    fill: rgb(68, 237, 171);
    opacity: 0.75;
}
.hole circle {
    fill: #000;
}
.drill circle {
    fill: #9e0b0b;
}
.lbl text {
    font-family: "Liberation Mono", monospace;
    font-size: 17px;
    fill: #d0ae2e;
    text-anchor: middle;
    dominant-baseline: central;
}
.lbl.small text {
    font-size: 12px;
}
.side-tabs {
    position: absolute;
    left: 1468px;
    top: 10px;
    display: flex;
    flex-direction: column;
    gap: 15px;
}
.side-tab {
    width: 27px;
    height: 146px;
    background: #444;
    display: flex;
    flex-direction: column;
    align-items: center;
    padding-top: 8px;
}
.side-tab span {
    writing-mode: vertical-rl;
    margin-top: 7px;
    font-family: "Liberation Sans", sans-serif;
    font-weight: bold;
    font-size: 11px;
    letter-spacing: 0.3px;
    color: #ddd;
    white-space: nowrap;
}
.side-tab.low {
    padding-top: 19px;
}
.side-tab.low span {
    margin-top: 11px;
}
.scrollbar {
    width: 16px;
    flex: none;
    background: #ececec;
    padding: 10px 5px 0;
}
.thumb {
    height: 100%;
    background: #808080;
}

/* taskbar */
.taskbar {
    height: 72px;
    background: linear-gradient(90deg, #e9e9e9, #e2e2e2 60%, #e6e6e6);
    border-top: 1px solid #d2d2d2;
    display: flex;
    align-items: center;
    padding-left: 532px;
}
.task-icons {
    display: flex;
}
.task {
    width: 66px;
    height: 57px;
    display: flex;
    align-items: center;
    justify-content: center;
    position: relative;
}
.task.dot::after, .task.red-dot::after {
    content: "";
    position: absolute;
    left: 50%;
    bottom: -2px;
    margin-left: -3px;
    width: 6px;
    height: 6px;
    border-radius: 50%;
    background: #7d7d7d;
}
.task.red-dot::after {
    background: #c42b1c;
}
.task.active::before {
    content: "";
    position: absolute;
    left: 8px;
    top: 0;
    width: 50px;
    height: 57px;
    border-radius: 5px;
    background: #f5f5f5;
    box-shadow: 2px 0 0 #efefef;
}
.task.active svg {
    position: relative;
}
.task.active::after {
    content: "";
    position: absolute;
    left: 21px;
    bottom: 0;
    width: 24px;
    height: 5px;
    border-radius: 3px;
    background: #0a78d6;
}
.tray {
    margin-left: 116px;
    display: flex;
    align-items: center;
    color: #1d1d1d;
    font-size: 17px;
    line-height: 23px;
}
.tray-cloud {
    margin-left: 15px;
}
.lang {
    width: 38px;
    margin-left: 20px;
    text-align: center;
}
.tray-wifi {
    margin-left: 26px;
}
.tray-sound {
    margin-left: 12px;
}
.tray-power {
    margin-left: 13px;
}
.clock {
    width: 90px;
    margin-left: 15px;
    text-align: right;
}
.badge {
    width: 24px;
    height: 24px;
    margin-left: 18px;
    border-radius: 50%;
    background: #0a78d6;
    color: #fff;
    font-size: 15px;
    text-align: center;
    line-height: 24px;
}

/* export dialog */
.dialog {
    position: absolute;
    left: 198px;
    top: 326px;
    width: 321px;
    height: 274px;
    background: #ececec;
    border: 1.5px solid #7f7f7f;
    border-radius: 9px;
    box-shadow: 0 6px 45px rgba(0, 0, 0, 0.28);
    overflow: hidden;
}
.dialog-title {
    height: 43px;
    background: #fff;
    display: flex;
    align-items: center;
    padding-left: 12px;
    font-size: 17px;
    color: #1a1a1a;
}
.dialog-title span {
    margin-left: 6px;
    margin-top: -1px;
}
.dialog-close {
    margin-left: auto;
    margin-right: 17px;
}
.dialog-body {
    padding: 16px 0 0 16px;
    display: flex;
    flex-direction: column;
    gap: 8px;
    font-size: 11.2px;
}
.dlg-row {
    display: flex;
    align-items: center;
}
.dlg-label {
    width: 68px;
}
.field {
    width: 116px;
    height: 24px;
    background: #fff;
    border: 1px solid #999;
    display: flex;
    align-items: center;
    position: relative;
}
.pad-text {
    padding-left: 10px;
    font-size: 12px;
}
.muted {
    color: #8a8a8a;
}
.btn {
    background: #fff;
    border: 1px solid #8a8a8a;
    border-radius: 3px;
    height: 26px;
    display: flex;
    align-items: center;
    justify-content: center;
    font-size: 12px;
}
.browse {
    width: 94px;
    margin-left: 9px;
}
.check-row {
    height: 17px;
    padding-left: 68px;
}
.dlg-check {
    width: 125px;
    display: flex;
    align-items: center;
}
.dlg-check.side {
    width: 98px;
}
.check {
    width: 14px;
    height: 14px;
    background: #fff;
    border: 1px solid #777;
    border-radius: 3px;
    margin-right: 9px;
    flex: none;
    display: block;
}
.check.on {
    border-color: #aaa;
}
.spin {
    position: absolute;
    right: 0;
    top: 0;
    width: 14px;
    height: 100%;
    border-left: 1px solid #999;
    display: flex;
    flex-direction: column;
    align-items: center;
    justify-content: center;
    gap: 5px;
}
.spin .up {
    border-left: 3.5px solid transparent;
    border-right: 3.5px solid transparent;
    border-bottom: 5px solid #666;
}
.spin .down {
    border-left: 3.5px solid transparent;
    border-right: 3.5px solid transparent;
    border-top: 5px solid #666;
}
.unit {
    margin-left: 9px;
}
.area-row {
    margin-top: 1px;
}
.area {
    height: 26px;
    padding-left: 4px;
    font-size: 12px;
}
.dlg-buttons {
    display: flex;
    justify-content: flex-end;
    gap: 9px;
    margin-top: 12px;
    padding-right: 16px;
}
.ok {
    width: 80px;
    border: 2px solid #0a84d6;
}
.cancel {
    width: 78px;
}
```
